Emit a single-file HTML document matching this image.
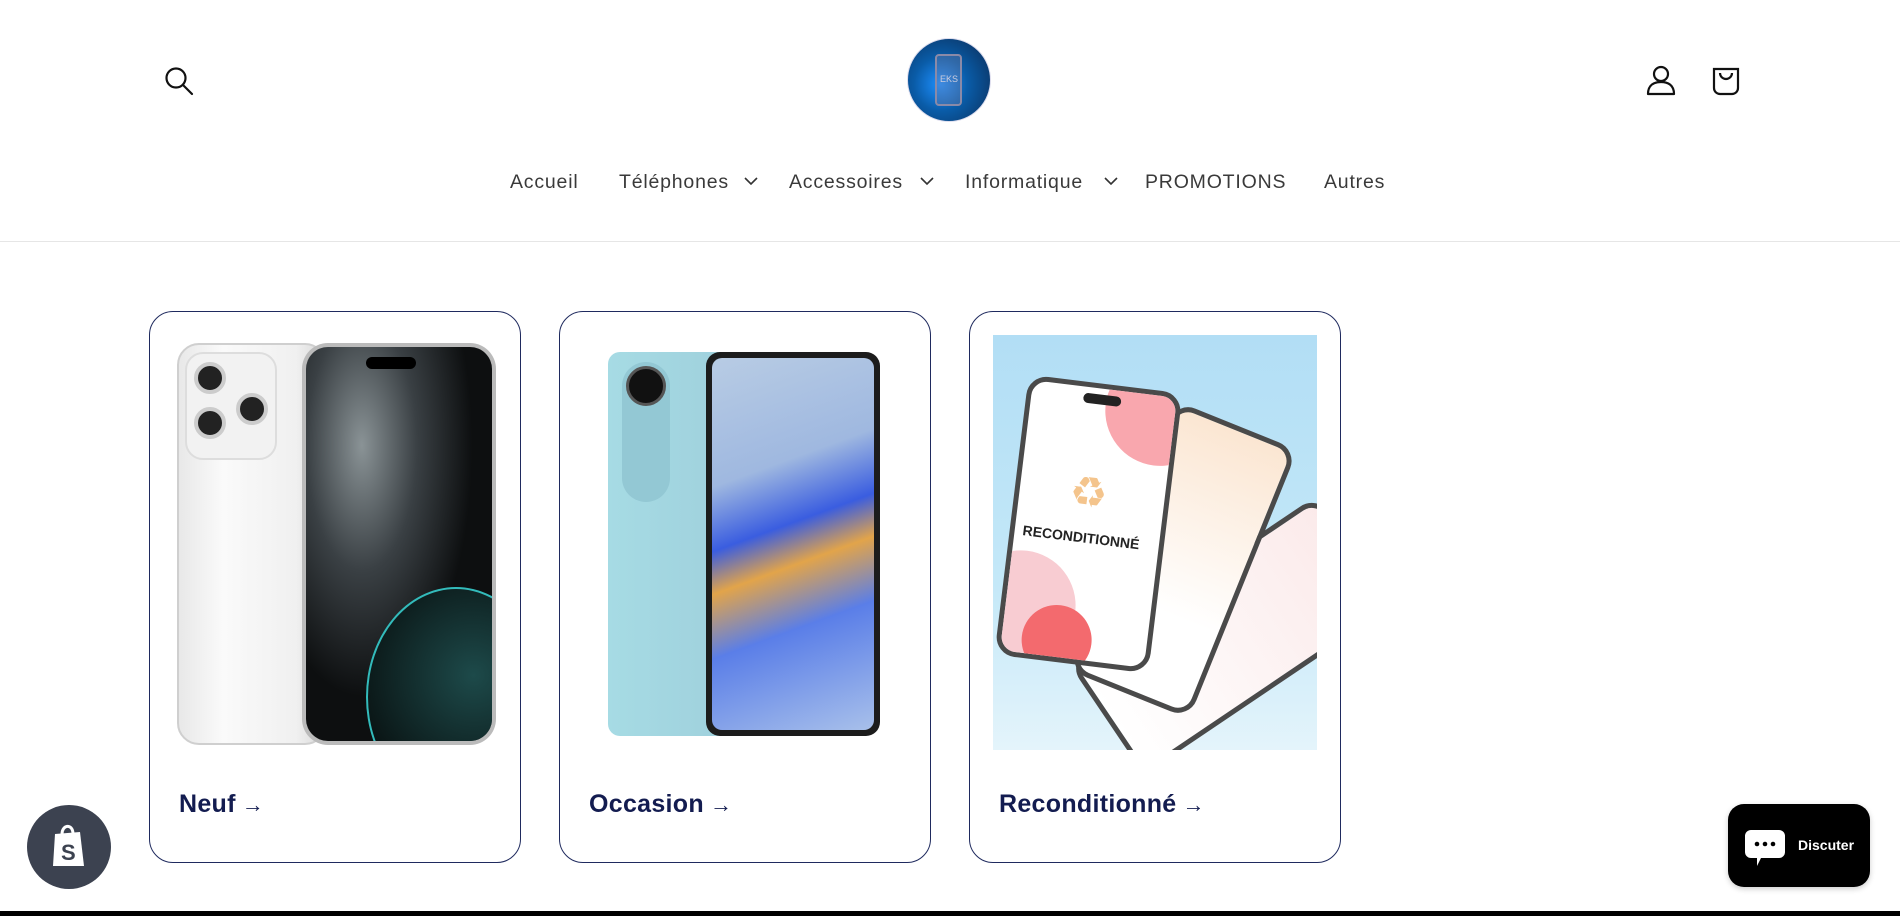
<!DOCTYPE html>
<html><head><meta charset="utf-8">
<style>
*{margin:0;padding:0;box-sizing:border-box}
body{width:1900px;height:916px;background:#fff;position:relative;overflow:hidden;font-family:"Liberation Sans",sans-serif}
.abs{position:absolute}
.nav{position:absolute;top:171px;font-size:19.5px;color:#3a3a3a;letter-spacing:0.8px}
.chev{position:absolute;top:176px}
.card{position:absolute;top:311px;width:372px;height:552px;border:1.3px solid #1f2a5e;border-radius:24px;overflow:hidden}
.title{position:absolute;left:29px;top:478px;font-size:25px;font-weight:bold;color:#131c50;letter-spacing:0.3px}
.title span{font-weight:normal;font-size:22px;margin-left:6px}
.ph{position:absolute;border:5px solid #4a4a4a;border-radius:20px;overflow:hidden}
</style></head><body>
<svg class="abs" style="left:164px;top:66px" width="30" height="30" viewBox="0 0 30 30"><circle cx="12" cy="12" r="9.5" fill="none" stroke="#111" stroke-width="2.2"/><line x1="19" y1="19" x2="28" y2="28" stroke="#111" stroke-width="2.2" stroke-linecap="round"/></svg>
<div class="abs" style="left:907px;top:38px;width:84px;height:84px;border-radius:50%;border:1px solid #dde;background:radial-gradient(circle at 40% 55%,#1e90ff 0%,#0a5ca8 40%,#0b3a6e 80%)"></div>
<div class="abs" style="left:935px;top:54px;width:27px;height:52px;border:2px solid #8a8aa8;border-radius:4px;background:rgba(120,130,170,.35)"></div>
<div class="abs" style="left:940px;top:74px;font-size:9px;color:#ccd">EKS</div>
<svg class="abs" style="left:1645px;top:64px" width="32" height="32" viewBox="0 0 32 32"><circle cx="16" cy="10" r="7" fill="none" stroke="#111" stroke-width="2.2"/><path d="M3 30 C3 21 9 18 16 18 C23 18 29 21 29 30 Z" fill="none" stroke="#111" stroke-width="2.2" stroke-linejoin="round"/></svg>
<svg class="abs" style="left:1711px;top:64px" width="30" height="32" viewBox="0 0 30 32"><path d="M3 5 H27 V24 A6 6 0 0 1 21 30 H9 A6 6 0 0 1 3 24 Z" fill="none" stroke="#111" stroke-width="2.2"/><path d="M9 9 A6 6 0 0 0 21 9" fill="none" stroke="#111" stroke-width="2.2"/></svg>
<div class="nav" style="left:510px">Accueil</div>
<div class="nav" style="left:619px">Téléphones</div>
<svg class="chev" style="left:744px" width="14" height="10"><path d="M1 2 L7 8 L13 2" fill="none" stroke="#333" stroke-width="1.6"/></svg>
<div class="nav" style="left:789px">Accessoires</div>
<svg class="chev" style="left:920px" width="14" height="10"><path d="M1 2 L7 8 L13 2" fill="none" stroke="#333" stroke-width="1.6"/></svg>
<div class="nav" style="left:965px">Informatique</div>
<svg class="chev" style="left:1104px" width="14" height="10"><path d="M1 2 L7 8 L13 2" fill="none" stroke="#333" stroke-width="1.6"/></svg>
<div class="nav" style="left:1145px">PROMOTIONS</div>
<div class="nav" style="left:1324px">Autres</div>
<div class="abs" style="left:0;top:241px;width:1900px;height:1px;background:#e6e6e6"></div>

<div class="card" style="left:149px">
  <div class="abs" style="left:27px;top:31px;width:150px;height:402px;border-radius:22px;background:linear-gradient(90deg,#e8e8e8,#fafafa 30%,#f0f0f0 80%,#d8d8d8);border:2px solid #cfcfcf"></div>
  <div class="abs" style="left:35px;top:40px;width:92px;height:108px;border-radius:18px;background:#f2f2f2;border:2px solid #ddd"></div>
  <div class="abs" style="left:44px;top:50px;width:32px;height:32px;border-radius:50%;background:#222;border:4px solid #ccc"></div>
  <div class="abs" style="left:86px;top:81px;width:32px;height:32px;border-radius:50%;background:#222;border:4px solid #ccc"></div>
  <div class="abs" style="left:44px;top:95px;width:32px;height:32px;border-radius:50%;background:#222;border:4px solid #ccc"></div>
  <div class="abs" style="left:152px;top:31px;width:194px;height:402px;border-radius:26px;background:#bbb;padding:4px">
    <div style="width:100%;height:100%;border-radius:22px;background:radial-gradient(ellipse at 30% 25%,#8a9396 0%,#3a4044 30%,#0d0f10 60%),#111;position:relative;overflow:hidden">
      <div style="position:absolute;left:60px;top:10px;width:50px;height:12px;border-radius:6px;background:#000"></div>
      <div style="position:absolute;left:60px;top:240px;width:180px;height:220px;border-radius:50%;border:2px solid #3bb;background:radial-gradient(circle at 60% 40%,#1d4a4a,#0a1515 70%)"></div>
    </div>
  </div>
  <div class="title">Neuf<span>→</span></div>
</div>
<div class="card" style="left:559px">
  <div class="abs" style="left:48px;top:40px;width:125px;height:384px;border-radius:12px;background:linear-gradient(90deg,#a6dbe4,#9fd0dc)"></div>
  <div class="abs" style="left:62px;top:50px;width:48px;height:140px;border-radius:24px;background:#93c8d4"></div>
  <div class="abs" style="left:66px;top:54px;width:40px;height:40px;border-radius:50%;background:#111;border:3px solid #555"></div>
  <div class="abs" style="left:146px;top:40px;width:174px;height:384px;border-radius:14px;background:#1c1c1c;padding:6px">
    <div style="width:100%;height:100%;border-radius:10px;background:linear-gradient(160deg,#b8cce4 0%,#9fb8e0 30%,#3a5de0 45%,#e2a44a 55%,#5a7ee8 70%,#a8c0ea 100%)"></div>
  </div>
  <div class="title">Occasion<span>→</span></div>
</div>
<div class="card" style="left:969px">
  <div class="abs" style="left:23px;top:23px;width:324px;height:415px;overflow:hidden;background:linear-gradient(180deg,#b2def5 0%,#c4e8f8 60%,#e4f4fb 100%)">
    <div class="ph" style="left:170px;top:150px;width:135px;height:300px;background:linear-gradient(180deg,#fbeaea,#fff);transform:rotate(56deg)"></div>
    <div class="ph" style="left:125px;top:80px;width:130px;height:290px;background:linear-gradient(180deg,#fbe6d2,#fff 70%);transform:rotate(22deg)"></div>
    <div class="ph" style="left:18px;top:48px;width:155px;height:282px;background:#fff;transform:rotate(7deg)">
      <div style="position:absolute;left:75px;top:-40px;width:110px;height:110px;border-radius:50%;background:#f9a7ae"></div>
      <div style="position:absolute;left:-40px;top:170px;width:110px;height:110px;border-radius:50%;background:#f8ccd2"></div>
      <div style="position:absolute;left:20px;top:220px;width:70px;height:70px;border-radius:50%;background:#f36a6e"></div>
      <div style="position:absolute;left:52px;top:6px;width:38px;height:10px;border-radius:5px;background:#222"></div>
      <div style="position:absolute;left:50px;top:80px;font-size:42px;color:#f4c48c">♻</div>
      <div style="position:absolute;left:8px;top:142px;font-size:14px;font-weight:bold;color:#222">RECONDITIONNÉ</div>
    </div>
  </div>
  <div class="title">Reconditionné<span>→</span></div>
</div>

<div class="abs" style="left:27px;top:805px;width:84px;height:84px;border-radius:50%;background:#3c4250"></div>
<svg class="abs" style="left:50px;top:822px" width="38" height="48" viewBox="0 0 38 48"><path d="M5 12 L30 10 L34 44 L3 44 Z" fill="#fff"/><path d="M12 12 C12 3 22 1 23 11" fill="none" stroke="#fff" stroke-width="3"/><text x="11" y="38" font-family="Liberation Sans" font-weight="bold" font-size="22" fill="#3c4250">S</text></svg>
<div class="abs" style="left:1728px;top:804px;width:142px;height:83px;border-radius:16px;background:#000;box-shadow:0 2px 6px rgba(0,0,0,.2)"></div>
<svg class="abs" style="left:1745px;top:828px" width="40" height="40" viewBox="0 0 40 40"><path d="M6 2 H34 A6 6 0 0 1 40 8 V24 A6 6 0 0 1 34 30 H16 L12 38 L12 30 H6 A6 6 0 0 1 0 24 V8 A6 6 0 0 1 6 2 Z" fill="#fff"/><circle cx="12" cy="16" r="2.3" fill="#000"/><circle cx="20" cy="16" r="2.3" fill="#000"/><circle cx="28" cy="16" r="2.3" fill="#000"/></svg>
<div class="abs" style="left:1798px;top:837px;font-size:14px;font-weight:bold;color:#fff">Discuter</div>
<div class="abs" style="left:0;top:911px;width:1900px;height:5px;background:#000"></div>
</body></html>
